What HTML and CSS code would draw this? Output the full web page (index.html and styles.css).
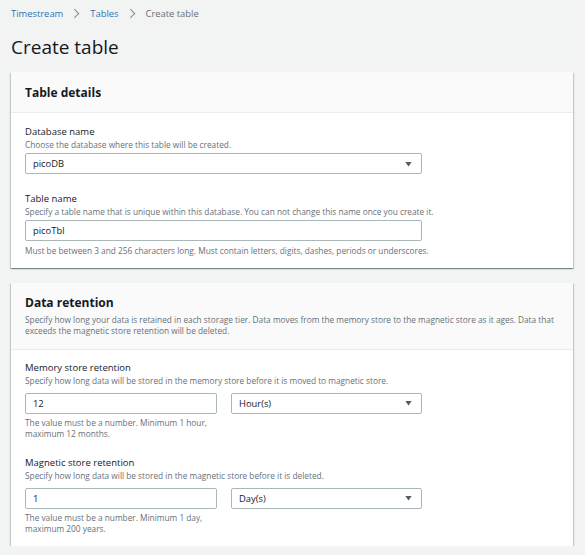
FILE: index.html
```html
<!DOCTYPE html>
<html>
<head>
<meta charset="utf-8">
<link rel="stylesheet" href="styles.css">
</head>
<body>
<div class="page">
  <nav class="crumbs">
    <a class="crumb-link">Timestream</a>
    <svg class="sep" viewBox="0 0 8 12" width="7" height="11"><path d="M1.5 1 L6.5 6 L1.5 11" fill="none" stroke="#879596" stroke-width="1.3"/></svg>
    <a class="crumb-link">Tables</a>
    <svg class="sep" viewBox="0 0 8 12" width="7" height="11"><path d="M1.5 1 L6.5 6 L1.5 11" fill="none" stroke="#879596" stroke-width="1.3"/></svg>
    <span class="crumb-current">Create table</span>
  </nav>
  <h1 class="title">Create table</h1>

  <section class="card">
    <div class="card-head">
      <h2 class="card-title">Table details</h2>
    </div>
    <div class="card-body">
      <div class="field">
        <div class="label">Database name</div>
        <div class="desc">Choose the database where this table will be created.</div>
        <div class="select wide"><span>picoDB</span><svg class="caret" viewBox="0 0 10 8" width="10" height="8"><path d="M0.5 1 L9.5 1 L5 7.5 Z" fill="#545b64"/></svg></div>
      </div>
      <div class="field">
        <div class="label">Table name</div>
        <div class="desc">Specify a table name that is unique within this database. You can not change this name once you create it.</div>
        <div class="input wide">picoTbl</div>
        <div class="hint">Must be between 3 and 256 characters long. Must contain letters, digits, dashes, periods or underscores.</div>
      </div>
    </div>
  </section>

  <section class="card second">
    <div class="card-head tall">
      <h2 class="card-title">Data retention</h2>
      <div class="head-desc">Specify how long your data is retained in each storage tier. Data moves from the memory store to the magnetic store as it ages. Data that exceeds the magnetic store retention will be deleted.</div>
    </div>
    <div class="card-body loose">
      <div class="field">
        <div class="label">Memory store retention</div>
        <div class="desc">Specify how long data will be stored in the memory store before it is moved to magnetic store.</div>
        <div class="pair">
          <div class="col">
            <div class="input">12</div>
            <div class="hint">The value must be a number. Minimum 1 hour,<br>maximum 12 months.</div>
          </div>
          <div class="select unit"><span>Hour(s)</span><svg class="caret" viewBox="0 0 10 8" width="10" height="8"><path d="M0.5 1 L9.5 1 L5 7.5 Z" fill="#545b64"/></svg></div>
        </div>
      </div>
      <div class="field">
        <div class="label">Magnetic store retention</div>
        <div class="desc">Specify how long data will be stored in the magnetic store before it is deleted.</div>
        <div class="pair">
          <div class="col">
            <div class="input">1</div>
            <div class="hint">The value must be a number. Minimum 1 day,<br>maximum 200 years.</div>
          </div>
          <div class="select unit"><span>Day(s)</span><svg class="caret" viewBox="0 0 10 8" width="10" height="8"><path d="M0.5 1 L9.5 1 L5 7.5 Z" fill="#545b64"/></svg></div>
        </div>
      </div>
    </div>
  </section>
</div>
</body>
</html>
```
FILE: styles.css
```css
html, body {
  margin: 0;
  padding: 0;
  background: #f2f3f3;
}
body {
  font-family: "Open Sans", "Noto Sans", sans-serif;
  color: #16191f;
}
.page {
  padding: 4px 12px 0 11px;
}
.crumbs {
  display: flex;
  align-items: center;
  gap: 10px;
  height: 18px;
  font-size: 9.4px;
}
.crumb-link {
  color: #2f75b5;
}
.crumb-current {
  color: #687078;
}
.sep {
  display: block;
}
.title {
  margin: 12px 0 0 0;
  font-size: 19px;
  font-weight: 400;
  line-height: 26px;
  color: #16191f;
}
.card {
  margin-top: 12px;
  background: #fff;
  box-shadow: 0 1px 1px 0 rgba(0, 28, 36, 0.3), 1px 1px 1px 0 rgba(0, 28, 36, 0.15), -1px 1px 1px 0 rgba(0, 28, 36, 0.15);
}
.card.second {
  margin-top: 15px;
}
.card-head {
  background: #fafafa;
  border-bottom: 1px solid #eaeded;
  padding: 12px 14px 0 14px;
  height: 28px;
}
.card-head.tall {
  height: auto;
  padding: 11px 14px 13px 14px;
}
.card-title {
  margin: 0;
  font-size: 12px;
  font-weight: 700;
  line-height: 18px;
}
.head-desc {
  font-size: 8.3px;
  line-height: 11px;
  color: #687078;
  margin-top: 1.5px;
}
.card-body {
  padding: 12px 14px 12px 14px;
  display: flex;
  flex-direction: column;
  gap: 18px;
}
.card-body.loose {
  padding-top: 11px;
  gap: 16.5px;
}
.label {
  font-size: 9.5px;
  line-height: 14px;
  color: #16191f;
}
.desc {
  font-size: 8.3px;
  line-height: 11px;
  color: #687078;
}
.hint {
  font-size: 8.3px;
  line-height: 11px;
  color: #687078;
  margin-top: 4px;
}
.input, .select {
  box-sizing: border-box;
  height: 21px;
  border: 1px solid #aab7b8;
  border-radius: 2px;
  background: #fff;
  font-size: 9.4px;
  line-height: 19px;
  padding: 0 7px;
  color: #16191f;
  margin-top: 3px;
}
.wide {
  width: 397px;
}
.select {
  display: flex;
  align-items: center;
  justify-content: space-between;
  padding-right: 9px;
}
.caret {
  display: block;
  width: 7px;
  height: 6px;
}
.pair {
  display: flex;
  gap: 14px;
  align-items: flex-start;
  margin-top: 4px;
}
.col {
  width: 192px;
  flex: none;
}
.col .input {
  width: 192px;
}
.loose .hint {
  margin-top: 3.5px;
}
.unit {
  width: 191px;
  flex: none;
}
```
